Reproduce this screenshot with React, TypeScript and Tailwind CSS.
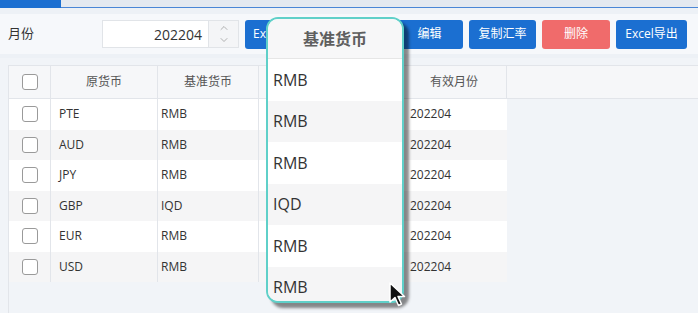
import { ChevronDown, ChevronUp } from "lucide-react";

const rows = [
  { from: "PTE", base: "RMB", month: "202204" },
  { from: "AUD", base: "RMB", month: "202204" },
  { from: "JPY", base: "RMB", month: "202204" },
  { from: "GBP", base: "IQD", month: "202204" },
  { from: "EUR", base: "RMB", month: "202204" },
  { from: "USD", base: "RMB", month: "202204" },
];

const font = "font-['Open_Sans','Noto_Sans_CJK_SC',sans-serif]";

function ToolButton({ label, red = false, width }: { label: string; red?: boolean; width: string }) {
  return (
    <button
      type="button"
      className={`${width} h-[29px] shrink-0 overflow-hidden rounded-[3px] text-[12px] text-white ${red ? "bg-[#f06b6b]" : "bg-[#1b6fd1]"}`}
    >
      {label}
    </button>
  );
}

function Checkbox() {
  return <span className="block h-[16px] w-[16px] rounded-[3px] border border-[#9a9a9a] bg-white" />;
}

export default function App() {
  return (
    <div className={`relative h-[313px] w-[698px] overflow-hidden bg-[#edf1f6] ${font}`}>
      {/* top tab strip */}
      <div className="flex h-[8px]">
        <div className="w-[61px] bg-[#1b6fd1]" />
        <div className="flex-1 border-b border-[#4a86d6] bg-[#e4e9f0]" />
      </div>

      {/* toolbar */}
      <div className="mt-[6px] flex h-[40px] items-center bg-[#f6f8fb] pl-[8px]">
        <span className="w-[94px] text-[13px] text-[#333]">月份</span>
        <div className="flex h-[28px] border border-[#e1e4e8] bg-white">
          <div className="flex w-[105px] items-center justify-end pr-[6px] text-[14px] text-[#333]">202204</div>
          <div className="flex w-[30px] flex-col items-center justify-center border-l border-[#e1e4e8] bg-[#f4f5f7] text-[#999]">
            <ChevronUp size={12} strokeWidth={1.5} />
            <ChevronDown size={12} strokeWidth={1.5} />
          </div>
        </div>
        <div className="ml-[6px] flex gap-[6px]">
          <button type="button" className="h-[29px] w-[71px] shrink-0 rounded-[3px] bg-[#1b6fd1] pl-[8px] text-left text-[12px] text-white">
            Ex
          </button>
          <ToolButton label="" width="w-[68px]" />
          <ToolButton label="编辑" width="w-[67px]" />
          <ToolButton label="复制汇率" width="w-[67px]" />
          <ToolButton label="删除" red width="w-[68px]" />
          <ToolButton label="Excel导出" width="w-[71px]" />
        </div>
      </div>

      {/* table panel */}
      <div className="mt-[4px] h-[255px] bg-[#f1f4f8] pl-[8px] pt-[7px]">
        <div className="h-full border-l border-[#e2e5ea]">
          <div className="flex h-[34px] border-y border-[#e2e5ea] bg-[#f6f7f9] text-[12px] text-[#555]">
            <div className="flex w-[42px] items-center justify-center border-r border-[#e2e5ea]">
              <Checkbox />
            </div>
            <div className="flex w-[107px] items-center justify-center border-r border-[#e2e5ea]">原货币</div>
            <div className="flex w-[101px] items-center justify-center border-r border-[#e2e5ea]">基准货币</div>
            <div className="w-[143px] border-r border-[#e2e5ea]" />
            <div className="flex w-[105px] items-center justify-center border-r border-[#e2e5ea]">有效月份</div>
          </div>
          {rows.map((row, i) => (
            <div
              key={row.from}
              className={`flex h-[30.5px] w-[498px] text-[12px] text-[#333] ${i % 2 === 1 ? "bg-[#f5f5f6]" : "bg-white"}`}
            >
              <div className="flex w-[42px] items-center justify-center border-r border-[#e2e5ea]">
                <Checkbox />
              </div>
              <div className="flex w-[107px] items-center border-r border-[#e2e5ea] pl-[8px]">{row.from}</div>
              <div className="flex w-[101px] items-center border-r border-[#e2e5ea] pl-[3px]">{row.base}</div>
              <div className="w-[143px] border-r border-[#e2e5ea]" />
              <div className="flex w-[105px] items-center pl-[8px]">{row.month}</div>
            </div>
          ))}
        </div>
      </div>

      {/* magnified column overlay */}
      <div className="absolute left-[266px] top-[17px] h-[286px] w-[138px] overflow-hidden rounded-[12px] border-2 border-[#5fd0c9] bg-white shadow-[5px_5px_3px_rgba(0,0,0,0.45)]">
        <div className="flex h-[40px] items-center justify-center border-b border-[#e6e6e6] bg-[#f7f7f8] text-[16px] font-semibold text-[#5f5f5f]">
          基准货币
        </div>
        {rows.map((row, i) => (
          <div
            key={row.from}
            className={`flex h-[41.5px] items-center pl-[5px] text-[16px] text-[#333] ${i % 2 === 1 ? "bg-[#f5f5f6]" : "bg-white"}`}
          >
            {row.base}
          </div>
        ))}
      </div>

      {/* mouse cursor */}
      <svg className="absolute left-[388px] top-[281px]" width="20" height="28" viewBox="0 0 20 28">
        <path d="M2 2 L2 21 L7 16.5 L10.5 24.5 L13.5 23 L10 15.5 L16.5 15.5 Z" fill="#111" stroke="#fff" strokeWidth="1.5" strokeLinejoin="round" />
      </svg>
    </div>
  );
}
